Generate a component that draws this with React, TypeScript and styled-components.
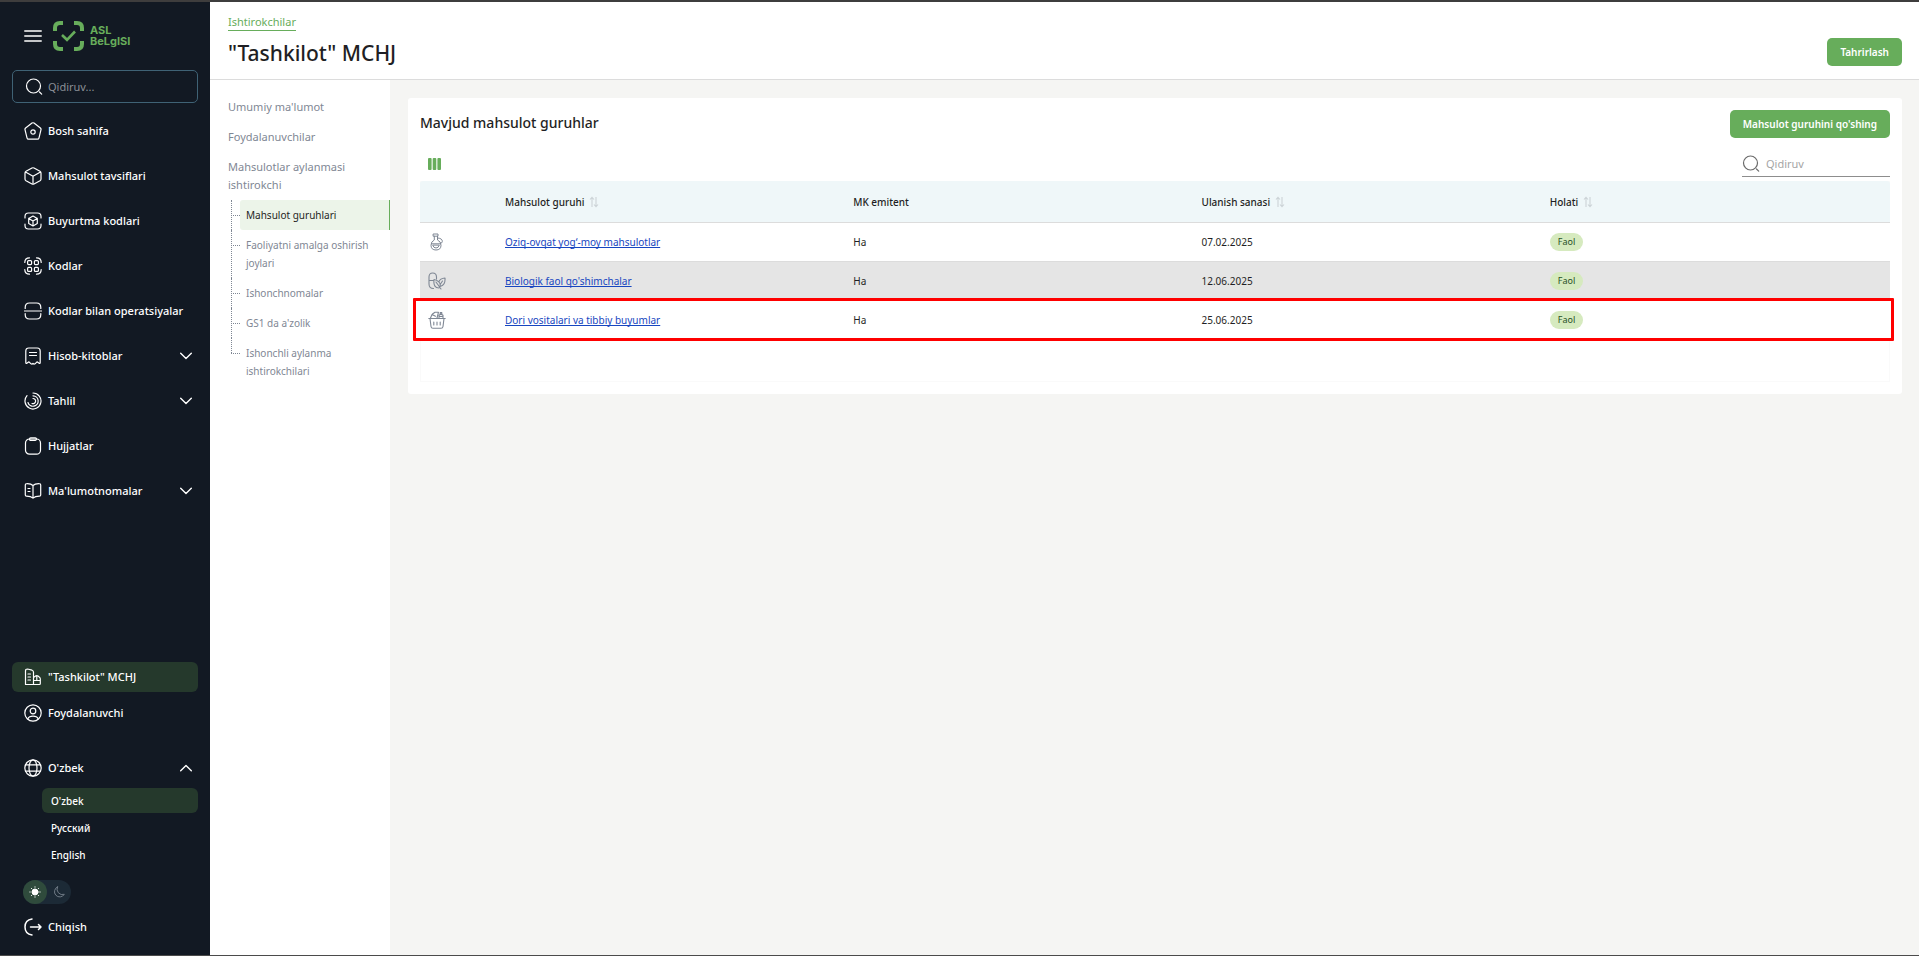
import React from "react";
import styled, { createGlobalStyle, css } from "styled-components";

const color = {
  side: "#121923",
  sideActive: "#25392c",
  green: "#67ad5b",
  line: "#dcdcdc",
  muted: "#7f8794",
  text: "#1f1f24",
  link: "#1746c0",
};

const GlobalStyle = createGlobalStyle`
  *, *::before, *::after { box-sizing: border-box; }
  body { margin: 0; background: #f5f5f3; color: ${color.text}; font-family: "Noto Sans", "Open Sans", sans-serif; font-size: 11px; line-height: 18px; }
  button, input { font: inherit; color: inherit; margin: 0; padding: 0; border: 0; background: none; outline: none; }
  button { cursor: pointer; }
  ul { list-style: none; margin: 0; padding: 0; }
  a { color: inherit; text-decoration: none; }
  svg { display: block; flex: none; }
`;

/* ---------- layout ---------- */

const Page = styled.div`
  display: flex;
  min-height: 100vh;
  border-top: 2px solid #3e3d3d;
  border-bottom: 1px solid #4b4b4b;
`;

const Sidebar = styled.aside`
  display: flex;
  flex-direction: column;
  flex: none;
  width: 210px;
  padding: 19px 12px 13px;
  background: ${color.side};
  color: #fff;
  font-weight: 500;
`;

const Main = styled.main`
  display: flex;
  flex-direction: column;
  flex: 1;
  min-width: 0;
`;

const Body = styled.div`
  display: flex;
  flex: 1;
`;

const Content = styled.div`
  flex: 1;
  min-width: 0;
  padding: 18px 17px 18px 18px;
`;

/* ---------- sidebar ---------- */

const Brand = styled.div`
  display: flex;
  align-items: center;
  height: 30px;
  padding-left: 12px;
`;

const MenuButton = styled.button`
  margin-right: 11px;
  color: #fff;
`;

const BrandName = styled.a`
  display: flex;
  align-items: center;
  gap: 6px;
  color: ${color.green};
  font: 700 11px/11px "Inter", sans-serif;

  span { display: block; }
`;

const SearchBox = styled.label`
  display: flex;
  align-items: center;
  gap: 5px;
  height: 33px;
  margin: 19px 0 13px;
  padding: 0 12px;
  border: 1px solid #3f6275;
  border-radius: 5px;

  input { flex: 1; min-width: 0; font-weight: 400; }
  input::placeholder { color: #8a8f96; opacity: 1; }
`;

const NavList = styled.ul<{ $gap: number }>`
  display: flex;
  flex-direction: column;
  gap: ${(p) => p.$gap}px;
`;

const navItem = css`
  display: flex;
  align-items: center;
  gap: 6px;
  width: 100%;
  height: 30px;
  padding: 0 6px 0 12px;
  border-radius: 6px;
  text-align: left;
  white-space: nowrap;
`;

const NavLink = styled.a<{ $active?: boolean }>`
  ${navItem}
  background: ${(p) => (p.$active ? color.sideActive : "transparent")};
`;

const NavToggle = styled.button`
  ${navItem}
  font-weight: 500;
  span { flex: 1; }
`;

const SideFooter = styled.div`
  margin-top: auto;
`;

const Language = styled.div`
  margin-top: 25px;
`;

const LanguageList = styled.ul`
  display: flex;
  flex-direction: column;
  gap: 2px;
  margin: 5px 0 13px 30px;
`;

const LanguageButton = styled.button<{ $active?: boolean }>`
  display: block;
  width: 100%;
  height: 25px;
  padding: 0 9px;
  border-radius: 6px;
  background: ${(p) => (p.$active ? color.sideActive : "transparent")};
  font-size: 10px;
  font-weight: 500;
  text-align: left;
`;

const ThemeSwitch = styled.div`
  display: flex;
  width: 48px;
  margin: 0 0 8px 11px;
  border-radius: 12px;
  background: #1c2a36;
`;

const ThemeButton = styled.button<{ $active?: boolean }>`
  display: grid;
  place-items: center;
  width: 24px;
  height: 24px;
  border-radius: 12px;
  background: ${(p) => (p.$active ? "#2f4b3c" : "transparent")};
  color: ${(p) => (p.$active ? "#fff" : "#6f7a85")};
`;

/* ---------- header ---------- */

const Header = styled.header`
  display: flex;
  justify-content: space-between;
  align-items: flex-end;
  padding: 12px 17px 13px 18px;
  border-bottom: 1px solid ${color.line};
  background: #fff;
`;

const Crumb = styled.a`
  display: block;
  width: max-content;
  border-bottom: 1px solid ${color.green};
  color: ${color.green};
  line-height: 16px;
`;

const Title = styled.h1`
  margin: 9px 0 0;
  font-size: 21px;
  font-weight: 500;
  line-height: 26px;
`;

const PrimaryButton = styled.button`
  height: 28px;
  padding: 0 13px;
  border-radius: 5px;
  background: ${color.green};
  color: #fff;
  font-size: 10px;
  font-weight: 600;
  white-space: nowrap;
`;

/* ---------- section menu ---------- */

const SectionNav = styled.nav`
  flex: none;
  width: 180px;
  padding: 12px 0 12px 18px;
  background: #fff;
  color: ${color.muted};
`;

const SectionLink = styled.a`
  display: block;
  padding: 6px 30px 6px 0;
`;

const Tree = styled.ul`
  padding-left: 3px;
  font-size: 10px;
`;

const TreeItem = styled.li`
  position: relative;
  padding-left: 9px;

  &::before,
  &::after {
    content: "";
    position: absolute;
    left: 0;
    top: 0;
  }
  &::before {
    height: 100%;
    border-left: 1px dotted ${color.muted};
  }
  &::after {
    top: 15px;
    width: 9px;
    border-top: 1px dotted ${color.muted};
  }
  &:last-child::before { height: 15px; }
`;

const TreeLink = styled.a<{ $active?: boolean }>`
  display: block;
  padding: 6px 20px 6px 6px;
  border-right: 1px solid transparent;
  border-radius: 3px 0 0 3px;
  ${(p) =>
    p.$active &&
    css`
      border-right-color: ${color.green};
      background: #ecf4e9;
      color: ${color.text};
    `}
`;

/* ---------- card and table ---------- */

const Card = styled.section`
  padding: 12px;
  border-radius: 3px;
  background: #fff;
`;

const CardHead = styled.div`
  display: flex;
  justify-content: space-between;
  align-items: flex-start;

  h2 { margin: 0; font-size: 14px; font-weight: 500; line-height: 26px; }
`;

const Toolbar = styled.div`
  display: flex;
  justify-content: space-between;
  align-items: center;
  margin: 13px 0 4px;
  padding-left: 8px;
`;

const TableSearch = styled.label`
  display: flex;
  align-items: center;
  gap: 6px;
  width: 148px;
  height: 26px;
  border-bottom: 1px solid #8d8d8d;
  color: #6b6b6b;

  input { flex: 1; min-width: 0; }
  input::placeholder { color: #a5a5a5; opacity: 1; }
`;

const TableArea = styled.div`
  min-height: 201px;
  box-shadow: inset 0 0 0 1px #fafafa;
`;

const Table = styled.table`
  width: 100%;
  table-layout: fixed;
  border-spacing: 0;
  font-size: 10px;

  th, td {
    height: 39px;
    padding: 0 8px;
    border-bottom: 1px solid ${color.line};
    text-align: left;
    vertical-align: middle;
  }
  th {
    height: 42px;
    background: #eff7f9;
    font-weight: 500;
  }
  th:first-child { width: 77px; border-top-left-radius: 3px; }
  th:last-child { border-top-right-radius: 3px; }
`;

const Row = styled.tr<{ $shaded?: boolean; $marked?: boolean }>`
  background: ${(p) => (p.$shaded ? "#e5e5e5" : "#fff")};
  ${(p) =>
    p.$marked &&
    css`
      position: relative;
      td:first-child::after {
        content: "";
        position: absolute;
        inset: -3px -4px -1px -7px;
        border: 3px solid #f00;
        border-radius: 1px;
        pointer-events: none;
      }
    `}
`;

const SortButton = styled.button`
  display: flex;
  align-items: center;
  gap: 5px;
  font-weight: 500;
`;

const GroupLink = styled.a`
  color: ${color.link};
  text-decoration: underline;
  text-decoration-skip-ink: none;
  text-underline-offset: 1px;
`;

const Badge = styled.span`
  display: block;
  width: max-content;
  padding: 0 8px;
  border-radius: 9px;
  background: #d6eabf;
  color: #27501f;
  font-size: 9px;
`;

/* ---------- icons ---------- */

const Icon = ({ children, size = 18, width = 1.2, stroke = "currentColor" }: { children: React.ReactNode; size?: number; width?: number; stroke?: string }) => (
  <svg width={size} height={size} viewBox={`0 0 ${size} ${size}`} fill="none" stroke={stroke} strokeWidth={width} strokeLinecap="round" strokeLinejoin="round" aria-hidden="true">
    {children}
  </svg>
);

const SearchIcon = () => (
  <Icon><circle cx="8.5" cy="8" r="7" /><path d="M14.5 14l2.2 2.2" /></Icon>
);
const Chevron = ({ up }: { up?: boolean }) => (
  <Icon size={12} width={1.4}><path d={up ? "M.7 8.7L6 3.5l5.3 5.2" : "M.7 3.3L6 8.5l5.3-5.2"} /></Icon>
);
const SortIcon = () => (
  <svg width="10" height="12" viewBox="0 0 10 12" fill="none" stroke="#cdd4d8" strokeWidth="1.1" aria-hidden="true">
    <path d="M3 11V1.500M1 3.500l2-2.200 2 2.200M7 1v9.500M5 8.500l2 2.200 2-2.200" />
  </svg>
);

const icons = {
  home: <Icon><path d="M8 1.100L1.600 6Q.8 6.700 1 7.600L3 15.800Q3.300 17.200 4.600 17.200H13.400Q14.700 17.200 15 15.800L17 7.600Q17.200 6.700 16.400 6L10 1.100Q9 .4 8 1.100Z" /><circle cx="9" cy="10" r="2.200" /></Icon>,
  box: <Icon><path d="M8 1L2 4.300Q1 4.900 1 6V12Q1 13.100 2 13.700L8 17Q9 17.500 10 17L16 13.700Q17 13.100 17 12V6Q17 4.900 16 4.300L10 1Q9 .5 8 1ZM1.500 5L9 9.200 16.500 5M9 9.200V17" /></Icon>,
  order: <Icon><path d="M1 6V4.500Q1 1 4.500 1H13.500Q17 1 17 4.500V6M17 12v1.500Q17 17 13.500 17H4.500Q1 17 1 13.500V12" /><path d="M9 4L4.700 6.400v5.200L9 14l4.300-2.400V6.400ZM4.700 6.400L9 9l4.300-2.600M9 9v5" /></Icon>,
  codes: <Icon><path d="M.8 5.500Q.8 .8 5.500 .8M12.500 .8Q17.200 .8 17.200 5.500M17.200 12.500Q17.200 17.200 12.500 17.200M5.500 17.200Q.8 17.200 .8 12.500" /><rect x="3.600" y="3.600" width="4" height="4" rx="1" /><rect x="10.400" y="3.600" width="4" height="4" rx="1" /><rect x="3.600" y="10.400" width="4" height="4" rx="1" /><rect x="10.400" y="10.400" width="4" height="4" rx="1" /></Icon>,
  scan: <Icon><path d="M1.200 6.500V5.500Q1.200 1 5.500 1H12.500Q16.800 1 16.800 5.500V6.500M1.200 11.500V12.500Q1.200 17 5.500 17H12.500Q16.800 17 16.800 12.500V11.500M.5 9H17.500" /></Icon>,
  bill: <Icon><path d="M1.800 15.500V4Q1.800 1 4.800 1H13.200Q16.200 1 16.200 4V15.500Q16.200 17 14.800 16L13 14.800 11 16.800Q10 17.400 9 16.500 8 17.400 7 16.800L5 14.800 3.200 16Q1.800 17 1.800 15.500ZM5.500 5.500h7M5.500 8.500h7" /></Icon>,
  chart: <Icon><path d="M9 1A8 8 0 1 1 3 3.700" /><path d="M9 3.800A5.200 5.200 0 1 1 4 10.500" /><path d="M9 6.500A2.600 2.600 0 1 1 8 11.500" /></Icon>,
  clipboard: <Icon><rect x="1.500" y="2" width="15" height="15.200" rx="4" /><path d="M5.500 2Q5.500 .8 6.700 .8H11.300Q12.500 .8 12.500 2T11.300 3.400H6.700Q5.500 3.400 5.500 2Z" /></Icon>,
  book: <Icon><path d="M9 3.500Q7 1.500 2.500 1.700 1.300 1.700 1.300 3V13Q1.300 14.200 2.500 14.200 7 14.200 9 16.200 11 14.200 15.500 14.200 16.700 14.200 16.700 13V3Q16.700 1.700 15.500 1.700 11 1.500 9 3.500ZM9 3.500V16M4 6.500h2M4 9.500h2" /></Icon>,
  company: <Icon><path d="M1.500 16.500V3Q1.500 1 3.500 1L8 2.200Q9.500 2.700 9.500 4.200V16.500M1.500 16.500H15.500M4 6h2.500M4 9h2.500M4 12h2.500M9.500 9.500L12 7.800Q13 7.200 14 8L15.500 9.200Q16.300 9.800 16.300 11V15.500Q16.300 16.500 15.500 16.500M9.500 12.500H16M12.800 8V12.500" /></Icon>,
  user: <Icon><circle cx="9" cy="9" r="8.200" /><circle cx="9" cy="7" r="2.800" /><path d="M3.800 15Q5 12.200 9 12.200T14.200 15" /></Icon>,
  globe: <Icon><circle cx="9" cy="9" r="8.200" /><ellipse cx="9" cy="9" rx="4" ry="8.200" /><path d="M1.500 5.800h15M1.500 12.200h15" /></Icon>,
  exit: <Icon width={1.5}><path d="M8 1Q1 2 1 9T8 17M6.500 9H17M14.500 6.500L17 9l-2.500 2.500" /></Icon>,
};

const groupIcons = {
  oil: <Icon stroke="#7f8794" width={1}><path d="M5.500 1h4.500v2.200H5.500ZM6.300 3.200V7Q3 8.500 3 12.200 3 17 8 17T13 12.200Q13 8.500 9.500 7V3.200M3.400 10.800H12.600M4.800 12.500Q5.500 15 8 15T11.200 12.500ZM10 5Q14.500 5.500 14.300 8.500 14 10.500 12.800 10.200" /></Icon>,
  supplement: <Icon stroke="#7f8794" width={1.1}><path d="M5.500 16.500Q1 16.500 1 12V5Q1 1 4.700 1T8.500 5V7M1 8.500H5M6 7.500Q5 16 11 16 13.500 13 11 10 9 8 6 7.500ZM8 10L13 17M11 9.500Q12 6.500 17 6 17.500 13 12.800 14.200M12.500 12L14.500 9" /></Icon>,
  basket: <Icon stroke="#7f8794" width={1.1}><path d="M.8 7.500H17.200M2 7.500L3 15.500Q3.200 17.200 5 17.200H13Q14.800 17.200 15 15.500L16 7.500M5.800 11v3M9 11v3M12.200 11v3M2.500 7L4 3.500 7.500 5.200M4.500 3L7 1.200H10.500L9 7M11 7V4.200Q13 2.600 15 4.200V7M12.200 3.500V1.500h1.600v2M11 5.500h4" /></Icon>,
};

const LogoMark = () => (
  <svg width="31" height="30" viewBox="0 0 31 30" fill="none" aria-hidden="true">
    <path d="M2 10V7Q2 2 7 2h3M21 2h3Q29 2 29 7v3M29 20v3Q29 28 24 28h-3M10 28H7Q2 28 2 23v-3" stroke={color.green} strokeWidth="4" />
    <path d="M9 14l5 4.800L22 10.500" stroke={color.green} strokeWidth="2.600" />
  </svg>
);

/* ---------- data ---------- */

const mainMenu: { label: string; icon: keyof typeof icons; expandable?: boolean }[] = [
  { label: "Bosh sahifa", icon: "home" },
  { label: "Mahsulot tavsiflari", icon: "box" },
  { label: "Buyurtma kodlari", icon: "order" },
  { label: "Kodlar", icon: "codes" },
  { label: "Kodlar bilan operatsiyalar", icon: "scan" },
  { label: "Hisob-kitoblar", icon: "bill", expandable: true },
  { label: "Tahlil", icon: "chart", expandable: true },
  { label: "Hujjatlar", icon: "clipboard" },
  { label: "Ma'lumotnomalar", icon: "book", expandable: true },
];

const treeItems = [
  "Mahsulot guruhlari",
  "Faoliyatni amalga oshirish joylari",
  "Ishonchnomalar",
  "GS1 da a'zolik",
  "Ishonchli aylanma ishtirokchilari",
];

const groups: { name: string; icon: keyof typeof groupIcons; date: string }[] = [
  { name: "Oziq-ovqat yog‘-moy mahsulotlar", icon: "oil", date: "07.02.2025" },
  { name: "Biologik faol qo'shimchalar", icon: "supplement", date: "12.06.2025" },
  { name: "Dori vositalari va tibbiy buyumlar", icon: "basket", date: "25.06.2025" },
];

export default function App() {
  return (
    <>
      <GlobalStyle />
      <Page>
        <Sidebar>
          <Brand>
            <MenuButton aria-label="Menyu">
              <Icon width={1.5}><path d="M.8 4h16.400M.8 9h16.400M.8 14h16.400" /></Icon>
            </MenuButton>
            <BrandName href="#">
              <LogoMark />
              <div>
                <span>ASL</span>
                <span>BeLgISI</span>
              </div>
            </BrandName>
          </Brand>
          <SearchBox>
            <SearchIcon />
            <input type="search" placeholder="Qidiruv..." aria-label="Qidiruv" />
          </SearchBox>
          <nav>
            <NavList $gap={15}>
              {mainMenu.map((m) => (
                <li key={m.label}>
                  {m.expandable ? (
                    <NavToggle aria-expanded="false">{icons[m.icon]}<span>{m.label}</span><Chevron /></NavToggle>
                  ) : (
                    <NavLink href="#">{icons[m.icon]}{m.label}</NavLink>
                  )}
                </li>
              ))}
            </NavList>
          </nav>
          <SideFooter>
            <NavList $gap={6}>
              <li><NavLink href="#" $active>{icons.company}"Tashkilot" MCHJ</NavLink></li>
              <li><NavLink href="#">{icons.user}Foydalanuvchi</NavLink></li>
            </NavList>
            <Language>
              <NavToggle aria-expanded="true">{icons.globe}<span>O'zbek</span><Chevron up /></NavToggle>
              <LanguageList>
                <li><LanguageButton $active>O'zbek</LanguageButton></li>
                <li><LanguageButton>Русский</LanguageButton></li>
                <li><LanguageButton>English</LanguageButton></li>
              </LanguageList>
            </Language>
            <ThemeSwitch>
              <ThemeButton $active aria-label="Yorug' mavzu">
                <Icon size={12} width={1}><circle cx="6" cy="6" r="3" fill="currentColor" /><path d="M6 .8v.4M6 10.800v.4M.8 6h.4M10.800 6h.4M2.300 2.300l.3.300M9.400 9.400l.3.300M2.300 9.700l.3-.3M9.400 2.600l.3-.3" /></Icon>
              </ThemeButton>
              <ThemeButton aria-label="Qorong'i mavzu">
                <Icon size={12} width={1}><path d="M4.500 .8A5.300 5.300 0 1 0 11.300 8.300 5.500 5.500 0 0 1 4.500 .8Z" /></Icon>
              </ThemeButton>
            </ThemeSwitch>
            <NavLink href="#">{icons.exit}Chiqish</NavLink>
          </SideFooter>
        </Sidebar>

        <Main>
          <Header>
            <div>
              <Crumb href="#">Ishtirokchilar</Crumb>
              <Title>"Tashkilot" MCHJ</Title>
            </div>
            <PrimaryButton>Tahrirlash</PrimaryButton>
          </Header>
          <Body>
            <SectionNav>
              <SectionLink href="#">Umumiy ma'lumot</SectionLink>
              <SectionLink href="#">Foydalanuvchilar</SectionLink>
              <SectionLink href="#">Mahsulotlar aylanmasi ishtirokchi</SectionLink>
              <Tree>
                {treeItems.map((t, i) => (
                  <TreeItem key={t}><TreeLink href="#" $active={i === 0}>{t}</TreeLink></TreeItem>
                ))}
              </Tree>
            </SectionNav>
            <Content>
              <Card>
                <CardHead>
                  <h2>Mavjud mahsulot guruhlar</h2>
                  <PrimaryButton>Mahsulot guruhini qo'shing</PrimaryButton>
                </CardHead>
                <Toolbar>
                  <button aria-label="Ustunlar">
                    <svg width="13" height="12" viewBox="0 0 13 12" fill={color.green} aria-hidden="true">
                      <rect width="3.600" height="12" rx="1" /><rect x="4.700" width="3.600" height="12" rx="1" /><rect x="9.400" width="3.600" height="12" rx="1" />
                    </svg>
                  </button>
                  <TableSearch>
                    <SearchIcon />
                    <input type="search" placeholder="Qidiruv" aria-label="Jadvaldan qidiruv" />
                  </TableSearch>
                </Toolbar>
                <TableArea>
                  <Table>
                    <thead>
                      <tr>
                        <th aria-label="Belgi" />
                        <th><SortButton>Mahsulot guruhi<SortIcon /></SortButton></th>
                        <th>MK emitent</th>
                        <th><SortButton>Ulanish sanasi<SortIcon /></SortButton></th>
                        <th><SortButton>Holati<SortIcon /></SortButton></th>
                      </tr>
                    </thead>
                    <tbody>
                      {groups.map((g, i) => (
                        <Row key={g.name} $shaded={i === 1} $marked={i === 2}>
                          <td>{groupIcons[g.icon]}</td>
                          <td><GroupLink href="#">{g.name}</GroupLink></td>
                          <td>Ha</td>
                          <td>{g.date}</td>
                          <td><Badge>Faol</Badge></td>
                        </Row>
                      ))}
                    </tbody>
                  </Table>
                </TableArea>
              </Card>
            </Content>
          </Body>
        </Main>
      </Page>
    </>
  );
}
